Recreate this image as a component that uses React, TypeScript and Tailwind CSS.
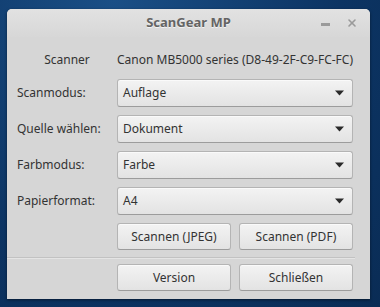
import { X } from 'lucide-react';

const rows = [
  { label: 'Scanmodus:', value: 'Auflage' },
  { label: 'Quelle wählen:', value: 'Dokument' },
  { label: 'Farbmodus:', value: 'Farbe' },
  { label: 'Papierformat:', value: 'A4' },
];

function Caret() {
  return (
    <svg width="9" height="6" viewBox="0 0 9 6" className="shrink-0">
      <path d="M0 0.5h9L4.5 5.5z" fill="#2a2a2a" />
    </svg>
  );
}

function Select({ value }: { value: string }) {
  return (
    <div className="flex h-[28px] w-[236px] items-center justify-between rounded-[3px] border border-[#b4b4b4] border-b-[#9c9c9c] bg-gradient-to-b from-[#f3f3f3] to-[#e3e3e3] pl-[5px] pr-[8px] shadow-[inset_0_1px_0_#fafafa]">
      <span>{value}</span>
      <Caret />
    </div>
  );
}

function Button({ children }: { children: React.ReactNode }) {
  return (
    <div className="flex h-[27px] w-[114px] items-center justify-center rounded-[3px] border border-[#b4b4b4] border-b-[#9c9c9c] bg-gradient-to-b from-[#f3f3f3] to-[#e3e3e3] shadow-[inset_0_1px_0_#fafafa]">
      {children}
    </div>
  );
}

export default function App() {
  return (
    <div
      className="h-[307px] w-[380px] overflow-hidden bg-[radial-gradient(ellipse_at_30%_0%,#1a4f86,#0c3463_60%,#0a2c55)] pl-[7px] pt-[9px] text-[12px] text-[#333333]"
      style={{ fontFamily: '"Noto Sans", "Open Sans", sans-serif' }}
    >
      <div className="flex h-[290px] w-[363px] flex-col rounded-t-[5px] bg-[#d6d6d6] shadow-[0_1px_3px_rgba(0,0,0,0.5)]">
        {/* title bar */}
        <div className="relative flex h-[28px] items-center justify-center rounded-t-[5px] bg-gradient-to-b from-[#e2e2e2] to-[#d7d7d7]">
          <span className="text-[13px] font-bold text-[#646464] [text-shadow:0_1px_0_#f2f2f2]">ScanGear MP</span>
          <div className="absolute right-[12px] top-[8px] flex items-center gap-[16px] text-[#9a9a9a]">
            <div className="mt-[3px] h-[3px] w-[9px] bg-[#9a9a9a]" />
            <X size={12} strokeWidth={3.2} />
          </div>
        </div>

        <div className="flex flex-col pl-[10px]">
          <div className="mt-[9px] flex h-[28px] items-center whitespace-nowrap">
            <div className="w-[100px] text-center">Scanner</div>
            <div className="w-[236px] text-center">Canon MB5000 series (D8-49-2F-C9-FC-FC)</div>
          </div>

          <div className="mt-[5px] flex flex-col gap-[8px]">
            {rows.map((r) => (
              <div key={r.label} className="flex items-center">
                <div className="w-[100px]">{r.label}</div>
                <Select value={r.value} />
              </div>
            ))}
            <div className="flex gap-[8px] pl-[100px]">
              <Button>Scannen (JPEG)</Button>
              <Button>Scannen (PDF)</Button>
            </div>
          </div>
        </div>

        <div className="mt-[7px] mr-[15px] h-[2px] border-t border-[#c2c2c2] border-b border-b-[#e4e4e4]" />

        <div className="mt-[5px] flex gap-[8px] pl-[110px]">
          <Button>Version</Button>
          <Button>Schließen</Button>
        </div>
      </div>
    </div>
  );
}
